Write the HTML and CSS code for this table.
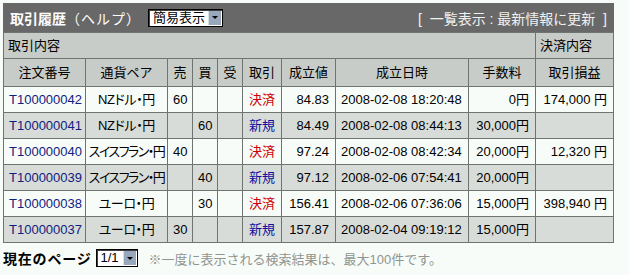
FILE: index.html
```html
<!DOCTYPE html>
<html lang="ja">
<head>
<meta charset="utf-8">
<title>取引履歴</title>
<link rel="stylesheet" href="styles.css">
</head>
<body>
<div class="page">
  <div class="titlebar">
    <div class="title-left">
      <span class="title">取引履歴</span><span class="help">（ヘルプ）</span>
      <span class="fake-select sel-mode"><span class="sel-text">簡易表示</span><span class="sel-btn"><span class="tri"></span></span></span>
    </div>
    <div class="title-right">[&nbsp; 一覧表示 : 最新情報に更新 &nbsp;]</div>
  </div>
  <table class="history">
    <colgroup>
      <col class="c-no"><col class="c-pair"><col class="c-s"><col class="c-s"><col class="c-s"><col class="c-kind"><col class="c-rate"><col class="c-date"><col class="c-fee"><col class="c-pl">
    </colgroup>
    <thead>
      <tr class="group">
        <th colspan="9" class="left">取引内容</th>
        <th class="left">決済内容</th>
      </tr>
      <tr class="cols">
        <th>注文番号</th><th>通貨ペア</th><th>売</th><th>買</th><th>受</th><th>取引</th><th>成立値</th><th>成立日時</th><th>手数料</th><th>取引損益</th>
      </tr>
    </thead>
    <tbody>
      <tr class="odd">
        <td class="no"><a>T100000042</a></td><td class="c pair">NZドル・円</td><td>60</td><td></td><td></td><td class="c close">決済</td><td class="r">84.83</td><td>2008-02-08 18:20:48</td><td class="r">0円</td><td class="r">174,000 円</td>
      </tr>
      <tr class="even">
        <td class="no"><a>T100000041</a></td><td class="c pair">NZドル・円</td><td></td><td>60</td><td></td><td class="c new">新規</td><td class="r">84.49</td><td>2008-02-08 08:44:13</td><td class="r">30,000円</td><td></td>
      </tr>
      <tr class="odd">
        <td class="no"><a>T100000040</a></td><td class="c pair narrow">スイスフラン・円</td><td>40</td><td></td><td></td><td class="c close">決済</td><td class="r">97.24</td><td>2008-02-08 08:42:34</td><td class="r">20,000円</td><td class="r">12,320 円</td>
      </tr>
      <tr class="even">
        <td class="no"><a>T100000039</a></td><td class="c pair narrow">スイスフラン・円</td><td></td><td>40</td><td></td><td class="c new">新規</td><td class="r">97.12</td><td>2008-02-06 07:54:41</td><td class="r">20,000円</td><td></td>
      </tr>
      <tr class="odd">
        <td class="no"><a>T100000038</a></td><td class="c pair">ユーロ・円</td><td></td><td>30</td><td></td><td class="c close">決済</td><td class="r">156.41</td><td>2008-02-06 07:36:06</td><td class="r">15,000円</td><td class="r">398,940 円</td>
      </tr>
      <tr class="even">
        <td class="no"><a>T100000037</a></td><td class="c pair">ユーロ・円</td><td>30</td><td></td><td></td><td class="c new">新規</td><td class="r">157.87</td><td>2008-02-04 09:19:12</td><td class="r">15,000円</td><td></td>
      </tr>
    </tbody>
  </table>
  <div class="footer">
    <span class="page-label">現在のページ</span>
    <span class="fake-select sel-page"><span class="sel-text">1/1</span><span class="sel-btn"><span class="tri"></span></span></span>
    <span class="note">※一度に表示される検索結果は、最大100件です。</span>
  </div>
</div>
</body>
</html>
```

FILE: styles.css
```css
html, body {
  margin: 0;
  padding: 0;
  background: #f8fcf8;
}
body {
  font-family: "Liberation Sans", "Noto Sans CJK JP", sans-serif;
  font-size: 13px;
  color: #000;
}
.page {
  padding: 3px 0 0 3px;
  width: 611px;
}
.titlebar {
  display: flex;
  align-items: center;
  justify-content: space-between;
  height: 29px;
  background: #686868;
  color: #fff;
  padding: 0 7px 0 7px;
}
.title-left {
  display: flex;
  align-items: center;
}
.title {
  font-weight: bold;
  font-size: 14px;
}
.help {
  font-size: 14px;
  margin-right: 7px;
  letter-spacing: 1px;
}
.title-right {
  font-size: 14px;
  color: #f0f0f0;
}
.fake-select {
  display: inline-flex;
  align-items: stretch;
  background: #fff;
  border: 1px solid #000;
  box-shadow: inset 1px 1px 0 #404040;
  color: #000;
  box-sizing: border-box;
  white-space: nowrap;
}
.sel-mode {
  width: 75px;
  height: 18px;
}
.sel-page {
  width: 42px;
  height: 18px;
}
.sel-text {
  flex: 1;
  font-size: 13px;
  line-height: 16px;
  padding-left: 4px;
  overflow: hidden;
}
.sel-btn {
  width: 12px;
  flex: none;
  background: #98a8bc;
  border-left: 1px solid #d8e0e8;
  display: flex;
  align-items: center;
  justify-content: center;
  margin: 1px 1px 1px 0;
}
.tri {
  width: 0;
  height: 0;
  border-left: 3px solid transparent;
  border-right: 3px solid transparent;
  border-top: 3px solid #000;
}
.history {
  border-collapse: collapse;
  table-layout: fixed;
  width: 611px;
  border: 1px solid #707470;
}
.c-no { width: 82px; }
.c-pair { width: 82px; }
.c-s { width: 25px; }
.c-kind { width: 39px; }
.c-rate { width: 54px; }
.c-date { width: 133px; }
.c-fee { width: 67px; }
.c-pl { width: 78px; }
.history th, .history td {
  border: 1px solid #707470;
  line-height: 17px;
  white-space: nowrap;
  overflow: hidden;
}
.history th {
  font-weight: normal;
  background: #c8ccc8;
  padding: 4px 0;
}
.history th.left {
  text-align: left;
  padding-left: 4px;
}
.history tr.cols th {
  padding: 5px 0 5px;
}
.history td {
  padding: 4px 5px;
}
.history tr.odd td { background: #f8fcf8; }
.history tr.even td { background: #d8dcd8; }
.history td.c { text-align: center; padding: 4px 0; }
.history td.pair {
  font-feature-settings: "palt";
  letter-spacing: -0.4px;
}
.history td.pair.narrow {
  letter-spacing: -1.5px;
}
.history td.r { text-align: right; padding-right: 6px; }
.history td.no { padding-left: 5px; }
.history a { color: #102080; }
.close { color: #d00000; }
.new { color: #1010a0; }
.footer {
  display: flex;
  align-items: center;
  margin-top: 5px;
}
.page-label {
  font-weight: bold;
  font-size: 14px;
  letter-spacing: 0.8px;
  margin-right: 4px;
}
.note {
  color: #909490;
  margin-left: 11px;
}
```
